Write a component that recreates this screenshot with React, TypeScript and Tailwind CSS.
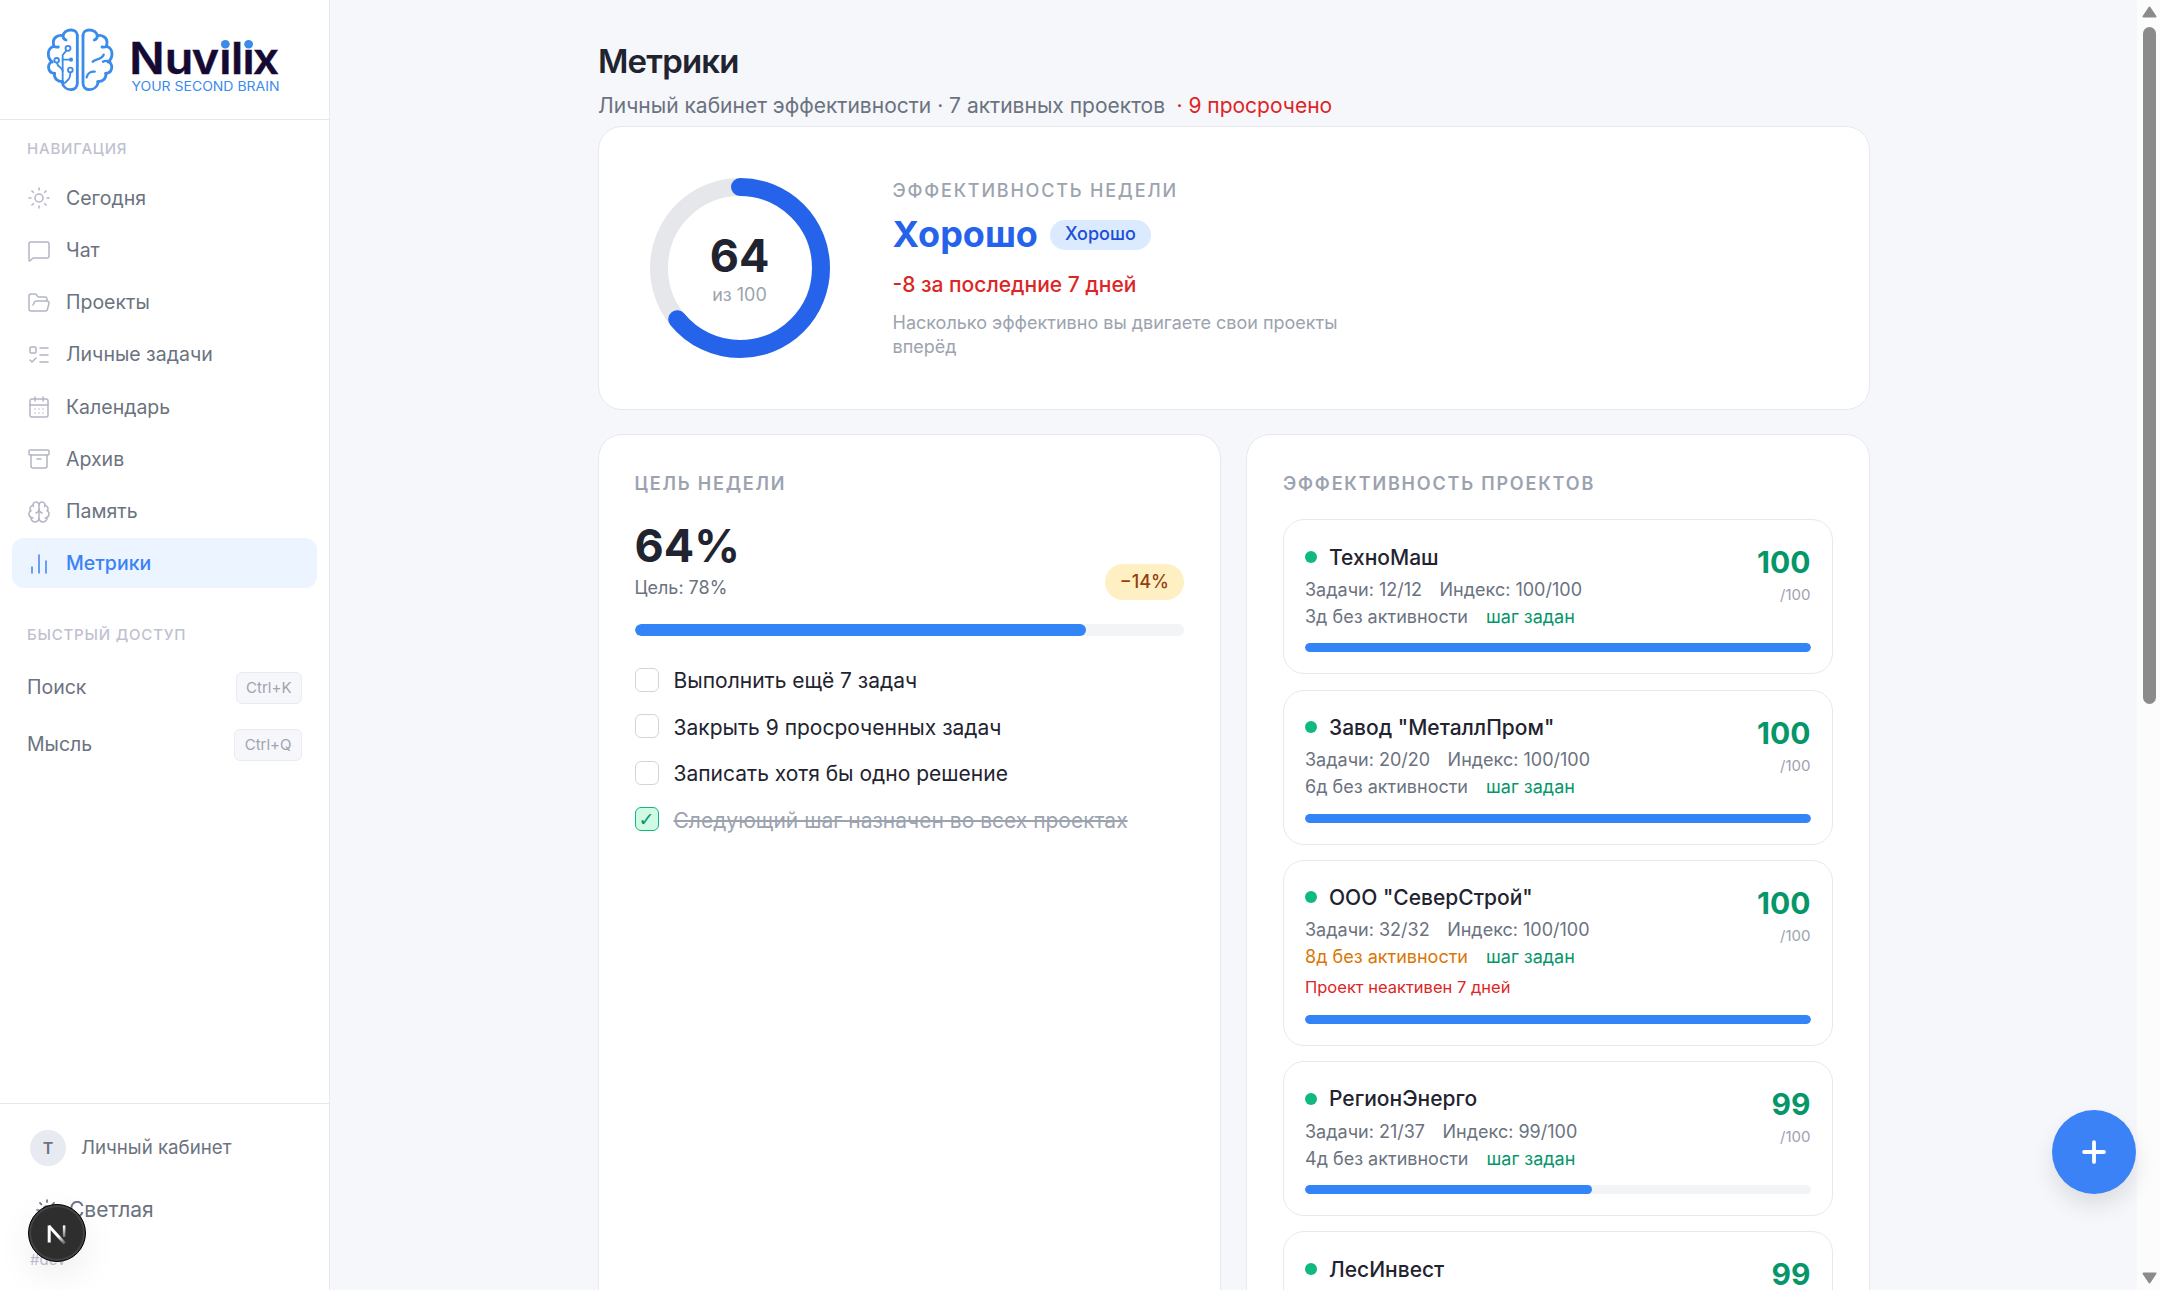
import React from "react";
import {
  Sun, MessageSquare, FolderOpen, ListTodo, CalendarDays, Archive, Brain, ChartNoAxesColumn, Plus,
} from "lucide-react";

const nav = [
  { label: "Сегодня", Icon: Sun },
  { label: "Чат", Icon: MessageSquare },
  { label: "Проекты", Icon: FolderOpen },
  { label: "Личные задачи", Icon: ListTodo },
  { label: "Календарь", Icon: CalendarDays },
  { label: "Архив", Icon: Archive },
  { label: "Память", Icon: Brain },
  { label: "Метрики", Icon: ChartNoAxesColumn, active: true },
];

const quick = [
  { label: "Поиск", keys: "Ctrl+K" },
  { label: "Мысль", keys: "Ctrl+Q" },
];

const goals = [
  { text: "Выполнить ещё 7 задач" },
  { text: "Закрыть 9 просроченных задач" },
  { text: "Записать хотя бы одно решение" },
  { text: "Следующий шаг назначен во всех проектах", done: true },
];

type Project = { name: string; tasks?: string; score: number; idle?: string; late?: boolean; warn?: string; fill: number };
const projects: Project[] = [
  { name: "ТехноМаш", tasks: "12/12", score: 100, idle: "3д", fill: 100 },
  { name: 'Завод "МеталлПром"', tasks: "20/20", score: 100, idle: "6д", fill: 100 },
  { name: 'ООО "СеверСтрой"', tasks: "32/32", score: 100, idle: "8д", late: true, warn: "Проект неактивен 7 дней", fill: 100 },
  { name: "РегионЭнерго", tasks: "21/37", score: 99, idle: "4д", fill: 56.8 },
  { name: "ЛесИнвест", score: 99, fill: 60 },
];

function BrainHalf() {
  return (
    <>
      <path d="M112 46C112 35 103 30 93 30 80 30 70 38 69 48c0 6 4 10 9 12" />
      <path d="M69 47C55 43 40 53 40 66c0 5 1 10 2 13 4 3 8 3 13 2" />
      <path d="M42 79C31 81 25 91 25 102c0 10 4 18 12 24" />
      <path d="M33 126C20 138 25 160 44 160" />
      <path d="M43 160c-1 16 9 25 25 25" />
      <path d="M66 185c3 15 14 24 26 24 12 0 20-8 20-19V46" />
    </>
  );
}

function Logo() {
  return (
    <svg width="240" height="72" viewBox="0 0 240 72" fill="none" aria-label="Nuvilix">
      <g transform="translate(-6 -4) scale(.3333)" stroke="#3b8beb" strokeWidth="8.500" strokeLinecap="round" strokeLinejoin="round">
        <BrainHalf />
        <g transform="matrix(-1 0 0 1 241 0)"><BrainHalf /></g>
        <g strokeWidth="5.500">
          <circle cx="84" cy="85" r="7.500" />
          <path d="M79 92 68 105V186" />
          <circle cx="50" cy="121" r="7" />
          <path d="M51 129c2 14 15 12 17 24M68 119h20" />
          <circle cx="93" cy="119" r="3.500" fill="#3b8beb" />
          <circle cx="91" cy="150" r="7" />
          <path d="M91 158c0 16-4 20-17 31" />
        </g>
        <g strokeWidth="7">
          <path d="M158 125c8-10 28-4 33-21" />
          <path d="M189 125c8-4 15-3 22 1" />
          <path d="M140 172c2-12 12-18 24-17" />
        </g>
      </g>
      <text transform="scale(1.07 1)" x="94.400 124.200 148.900 167.600 178.700 189.300 205.600" y="50" textAnchor="middle" fill="#140a33" stroke="#140a33" strokeWidth="0.400" fontFamily="Inter" fontWeight="600" fontSize="43.500">Nuvilix</text>
      <circle cx="179.300" cy="20.200" r="4.300" fill="#3b8beb" />
      <circle cx="202.600" cy="20.200" r="4.300" fill="#3b8beb" />
      <text x="85.500" y="67" fill="#3b8beb" fontFamily="Inter" fontSize="12.500" textLength="148" lengthAdjust="spacingAndGlyphs">YOUR SECOND BRAIN</text>
    </svg>
  );
}

function Sidebar() {
  return (
    <aside className="flex w-[330px] shrink-0 flex-col border-r border-[#e6e8f1] bg-white">
      <div className="flex h-[120px] shrink-0 items-center border-b border-[#e6e8f1] pl-[46px]">
        <Logo />
      </div>
      <div className="mt-[19px] pl-[27px] text-[15px] leading-[20px] font-medium tracking-[0.8px] text-[#bfc1d0]">НАВИГАЦИЯ</div>
      <nav className="mt-[14px] flex flex-col gap-[2.200px] px-3">
        {nav.map(({ label, Icon, active }) => (
          <div key={label} className={"flex h-[50px] w-[305px] items-center gap-[15px] rounded-[12px] pt-[0.800px] pl-[15px] text-[19.500px] " + (active ? "bg-[#ecf4ff] font-medium text-[#3b82f6]" : "text-[#6b7280]")}>
            <Icon size={24} strokeWidth={1.500} className={active ? "text-[#3b82f6]" : "text-[#b3b5c4]"} />
            {label}
          </div>
        ))}
      </nav>
      <div className="mt-[37px] pl-[27px] text-[15px] leading-[20px] font-medium tracking-[0.8px] text-[#bfc1d0]">БЫСТРЫЙ ДОСТУП</div>
      <div className="mt-[14px] flex flex-col">
        {quick.map((q) => (
          <div key={q.label} className="flex h-[57px] items-center justify-between pr-[27px] pl-[27px] text-[19.500px] text-[#6b7280]">
            {q.label}
            <span className="rounded-[6px] border border-[#e9eaf2] bg-[#f6f7fb] px-[9.500px] py-1 text-[15px] leading-[22px] text-[#a0a3b1]">{q.keys}</span>
          </div>
        ))}
      </div>
      <div className="mt-auto flex h-[187px] flex-col border-t border-[#e6e8f1] px-[30px] pt-[26px]">
        <div className="flex h-9 items-center gap-[15px] text-[18.700px] text-[#6b7280]">
          <span className="flex size-9 items-center justify-center rounded-full bg-[#e8eaf2] text-[16px] font-semibold">T</span>
          Личный кабинет
        </div>
        <div className="mt-[26px] flex h-9 items-center gap-[10px] pl-[5px] text-[21px] text-[#6b7280]">
          <Sun size={24} strokeWidth={1.700} />
          Светлая
        </div>
        <div className="mt-[22px] text-[15px] leading-[20px] text-[#bfc1d0]">#dev</div>
      </div>
    </aside>
  );
}

function Ring() {
  const c = 2 * Math.PI * 81;
  return (
    <div className="grid size-[180px] shrink-0 place-items-center">
      <svg className="col-start-1 row-start-1" width="180" height="180" viewBox="0 0 180 180" fill="none">
        <circle cx="90" cy="90" r="81" stroke="#e5e7eb" strokeWidth="18" />
        <circle cx="90" cy="90" r="81" stroke="#2563eb" strokeWidth="18" strokeLinecap="round" strokeDasharray={`${c * 0.64} ${c}`} transform="rotate(-90 90 90)" />
      </svg>
      <div className="col-start-1 row-start-1 flex flex-col items-center pt-[2px]">
        <span className="text-[45px] leading-[48px] font-bold text-[#1f2430]">64</span>
        <span className="mt-[3px] text-[18px] leading-[24px] text-[#9ca3af]">из 100</span>
      </div>
    </div>
  );
}

function ProjectCard({ p }: { p: Project }) {
  return (
    <div className="shrink-0 rounded-[21px] border border-[#e7e9ef] px-[21px] pt-[22px] pb-[21px]">
      <div className="flex justify-between">
        <div>
          <div className="flex h-[30px] items-center gap-3">
            <span className="mb-px size-3 rounded-full bg-[#10b981]" />
            <span className="text-[21px] font-medium text-[#1f2430]">{p.name}</span>
          </div>
          {p.tasks && (
            <div className="mt-[3.500px] flex h-[27px] items-center gap-[17.500px] text-[18px] text-[#6b7280]">
              <span>Задачи: {p.tasks}</span>
              <span>Индекс: {p.score}/100</span>
            </div>
          )}
          {p.idle && (
            <div className="flex h-[27px] items-center gap-[18px] text-[18px]">
              <span className={p.late ? "text-[#d97706]" : "text-[#6b7280]"}>{p.idle} без активности</span>
              <span className="text-[#059669]">шаг задан</span>
            </div>
          )}
          {p.warn && <div className="mt-[5px] h-[26px] text-[16.500px] leading-[25px] text-[#dc2626]">{p.warn}</div>}
        </div>
        <div className="flex flex-col items-end">
          <span className="mt-[2px] text-[30px] leading-[36px] font-bold text-[#059669]">{p.score}</span>
          {p.tasks && <span className="mt-[5px] text-[15px] leading-[20px] text-[#9ca3af]">/100</span>}
        </div>
      </div>
      <div className="mt-[13.500px] h-[9px] overflow-hidden rounded-full bg-[#f3f4f6]">
        <div className="h-full rounded-full bg-[#3385f7]" style={{ width: `${p.fill}%` }} />
      </div>
    </div>
  );
}

export default function App() {
  return (
    <div className="relative flex h-[1290px] w-[2160px] overflow-hidden bg-[#f5f7fb] font-['Inter',sans-serif]">
      <Sidebar />
      <main className="flex flex-1 flex-col items-center overflow-hidden">
        <div className="w-[1271px] shrink-0">
          <h1 className="mt-[39px] text-[33px] leading-[44px] font-semibold tracking-[-0.825px] text-[#1f2430]">Метрики</h1>
          <div className="mt-[8px] text-[21px] leading-[30px] text-[#6b7280]">
            Личный кабинет эффективности · 7 активных проектов <span className="ml-[5.500px] text-[#dc2626]">· 9 просрочено</span>
          </div>
        </div>
        <section className="mt-[5px] flex h-[284px] w-[1272px] shrink-0 items-center gap-[63px] rounded-[24px] border border-[#e7e9f0] bg-white pl-[51px]">
          <Ring />
          <div className="pt-[2px]">
            <div className="text-[18px] leading-[24px] font-medium tracking-[1.8px] text-[#9ca3af]">ЭФФЕКТИВНОСТЬ НЕДЕЛИ</div>
            <div className="mt-[8px] flex h-[46px] items-center gap-3">
              <span className="text-[36px] font-bold text-[#2563eb]">Хорошо</span>
              <span className="mt-[2px] h-[30px] rounded-full bg-[#dbeafe] px-[15px] text-[18px] leading-[28px] font-medium text-[#1d4ed8]">Хорошо</span>
            </div>
            <div className="mt-[13px] text-[21px] leading-[30px] font-medium text-[#dc2626]">-8 за последние 7 дней</div>
            <div className="mt-[11px] w-[480px] text-[18px] leading-[24px] text-[#9ca3af]">Насколько эффективно вы двигаете свои проекты вперёд</div>
          </div>
        </section>
        <div className="mt-[24px] grid w-[1272px] flex-1 grid-cols-2 gap-[25px]">
          <section className="h-[1200px] rounded-[24px] border border-[#e7e9f0] bg-white px-9 pt-[36.500px]">
            <h2 className="text-[18px] leading-[24px] font-semibold tracking-[1.8px] text-[#9ca3af]">ЦЕЛЬ НЕДЕЛИ</h2>
            <div className="mt-[26.500px] flex items-end justify-between">
              <div>
                <div className="text-[45px] leading-[48px] font-bold text-[#1f2430]">64%</div>
                <div className="mt-[6px] text-[18px] leading-[24px] text-[#6b7280]">Цель: 78%</div>
              </div>
              <span className="h-9 rounded-full bg-[#fef0c3] px-[15px] text-[18px] leading-[35px] font-medium text-[#92400e]">−14%</span>
            </div>
            <div className="mt-6 h-3 overflow-hidden rounded-full bg-[#f3f4f6]">
              <div className="h-full w-[82.1%] rounded-full bg-[#3385f7]" />
            </div>
            <div className="mt-[27px] flex flex-col gap-[10.500px]">
              {goals.map((g) => (
                <div key={g.text} className="flex h-9 items-center gap-[15px]">
                  <span className={"mb-[3px] flex size-[24px] items-center justify-center rounded-[6px] border-[1.500px] font-['DejaVu_Sans',sans-serif] text-[19px] leading-none " + (g.done ? "border-[#10b981] bg-[#d1fae5] text-[#059669]" : "border-[#d1d5db]")}>
                    {g.done ? "✓" : ""}
                  </span>
                  <span className={"text-[21px] " + (g.done ? "text-[#9ca3af] line-through" : "text-[#1f2430]")}>{g.text}</span>
                </div>
              ))}
            </div>
          </section>
          <section className="flex h-[1200px] flex-col gap-[15.300px] overflow-hidden rounded-[24px] border border-[#e7e9f0] bg-white px-9 pt-[36.500px]">
            <h2 className="mb-[8.500px] text-[18px] leading-[24px] font-semibold tracking-[1.8px] text-[#9ca3af]">ЭФФЕКТИВНОСТЬ ПРОЕКТОВ</h2>
            {projects.map((p) => <ProjectCard key={p.name} p={p} />)}
          </section>
        </div>
      </main>
      <div className="flex w-[23px] shrink-0 flex-col items-center bg-[#fcfcfc] pl-[1px]">
        <svg className="mt-[6px] shrink-0" width="15" height="12" viewBox="0 0 15 12"><path d="M7.500 1.500 13.500 10.500H1.500Z" fill="#8b8b8b" stroke="#8b8b8b" strokeWidth="2" strokeLinejoin="round" /></svg>
        <div className="mt-[9px] h-[677px] w-[13px] rounded-full bg-[#8b8b8b]" />
        <svg className="mt-auto mb-[6px] shrink-0" width="15" height="12" viewBox="0 0 15 12"><path d="M7.500 10.500 1.500 1.500H13.500Z" fill="#8b8b8b" stroke="#8b8b8b" strokeWidth="2" strokeLinejoin="round" /></svg>
      </div>
      <button className="absolute top-[1109.500px] left-[2052px] flex size-[84px] items-center justify-center rounded-full bg-[#3b82f6] text-white shadow-[0_12px_22px_rgba(0,0,0,0.10)]">
        <Plus size={34} strokeWidth={2.700} />
      </button>
      <div className="absolute top-[1203.500px] left-[28px] flex size-[58px] items-center justify-center rounded-full border border-black bg-[#2e2e2e] shadow-[inset_0_0_0_2px_#444,0_14px_36px_rgba(0,0,0,0.07)]">
        <svg width="24" height="24" viewBox="0 0 24 24" fill="none">
          <defs>
            <linearGradient id="diag" gradientUnits="userSpaceOnUse" x1="14" y1="15" x2="21" y2="23">
              <stop stopColor="#fff" />
              <stop offset="1" stopColor="#fff" stopOpacity="0.1" />
            </linearGradient>
            <linearGradient id="stem" gradientUnits="userSpaceOnUse" x1="19" y1="5" x2="19" y2="16">
              <stop stopColor="#fff" />
              <stop offset="1" stopColor="#fff" stopOpacity="0" />
            </linearGradient>
          </defs>
          <path d="M4.200 21.500V4.500" stroke="#fff" strokeWidth="3" />
          <path d="M3.900 5 19.800 22.500" stroke="url(#diag)" strokeWidth="3" />
          <path d="M19.100 4.500 V16.010" stroke="#fff" strokeOpacity="0.350" strokeWidth="2.400" />
          <rect x="17.900" y="4.500" width="2.400" height="11.500" fill="url(#stem)" />
        </svg>
      </div>
    </div>
  );
}
